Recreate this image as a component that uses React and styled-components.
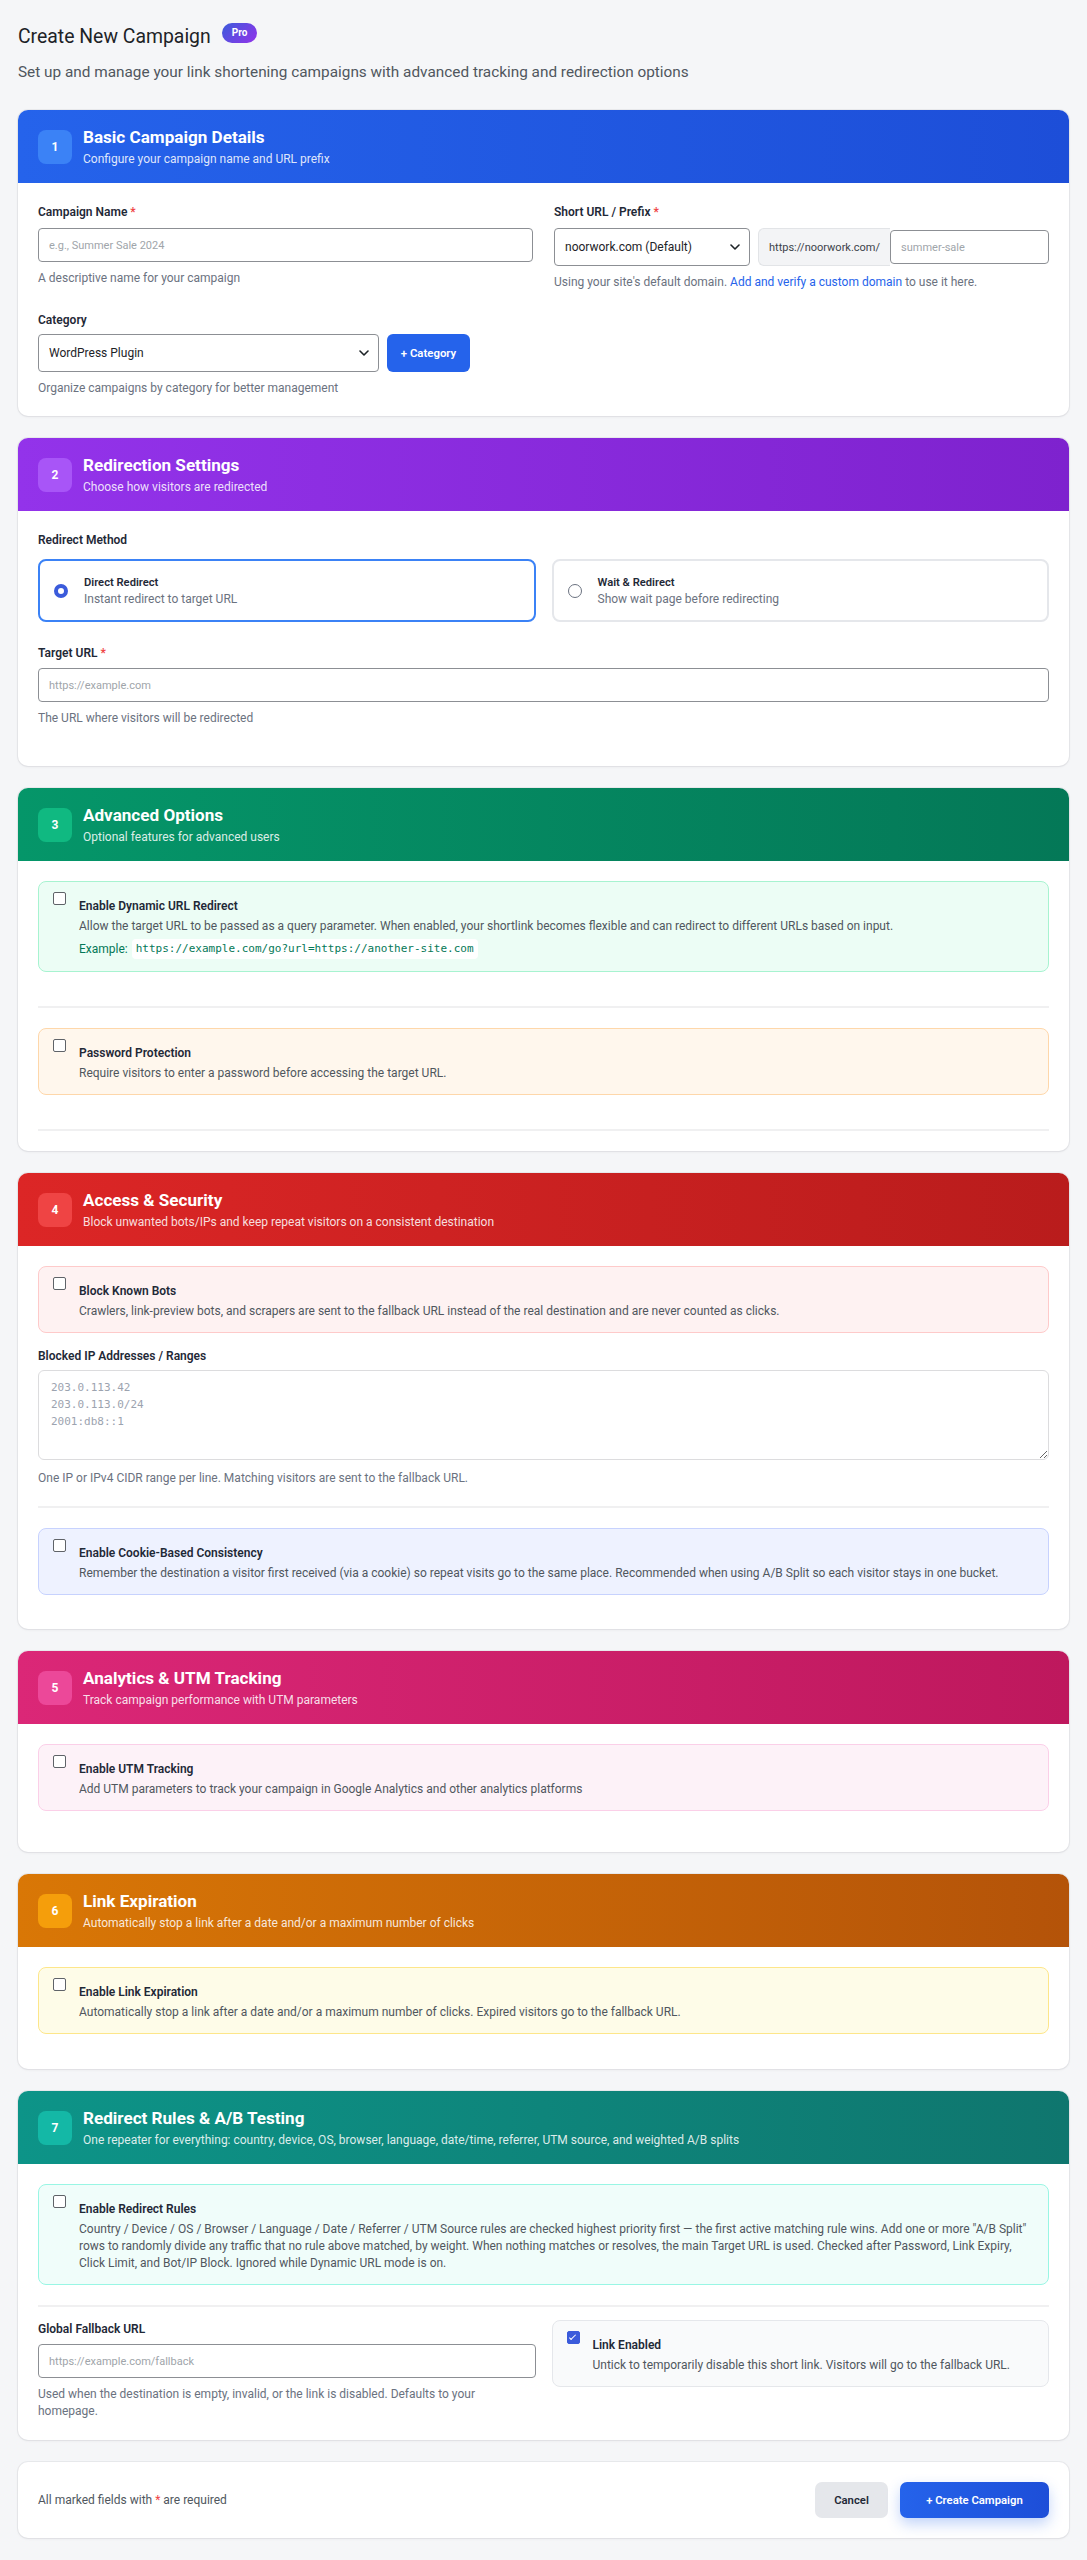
import React from 'react';
import styled, { createGlobalStyle, css } from 'styled-components';

const GlobalStyle = createGlobalStyle`
  html, body { margin: 0; padding: 0; }
  body {
    background: #f5f6f8;
    font-family: Roboto, "Noto Sans", "Liberation Sans", Arial, sans-serif;
    color: #1f2937;
    -webkit-font-smoothing: antialiased;
  }
  *, *::before, *::after { box-sizing: border-box; }
`;

const Page = styled.div`
  padding: 23px 18px 24px;
`;

const TitleRow = styled.div`
  display: flex;
  align-items: flex-start;
  gap: 11px;
`;

const Title = styled.h1`
  margin: 0;
  font-size: 19.4px;
  line-height: 28px;
  font-weight: 400;
  color: #1d2327;
`;

const ProBadge = styled.span`
  display: inline-block;
  height: 20px;
  line-height: 20px;
  padding: 0 10px;
  border-radius: 10px;
  font-size: 10px;
  font-weight: 700;
  color: #fff;
  background: linear-gradient(135deg, #3b5bdb 0%, #9333ea 100%);
`;

const Subtitle = styled.p`
  margin: 10px 0 27px;
  font-size: 15.35px;
  line-height: 22px;
  color: #50575e;
`;

const Stack = styled.div`
  display: flex;
  flex-direction: column;
  gap: 22px;
`;

const Card = styled.section`
  background: #fff;
  border-radius: 10px;
  overflow: hidden;
  box-shadow: 0 0 0 1px rgba(15, 23, 42, 0.05), 0 1px 3px rgba(15, 23, 42, 0.06);
`;

const CardHeader = styled.header`
  display: flex;
  align-items: center;
  gap: 11px;
  min-height: 73px;
  padding: 0 20px;
  background: linear-gradient(90deg, ${p => p.$from} 0%, ${p => p.$to} 100%);
  color: #fff;
`;

const StepBadge = styled.span`
  flex: none;
  width: 34px;
  height: 34px;
  border-radius: 8px;
  display: flex;
  align-items: center;
  justify-content: center;
  font-size: 12px;
  font-weight: 700;
  color: #fff;
  background: ${p => p.$bg};
`;

const HeaderText = styled.div`
  display: flex;
  flex-direction: column;
`;

const HeaderTitle = styled.h2`
  margin: 0;
  font-size: 17.1px;
  line-height: 22px;
  font-weight: 700;
`;

const HeaderSub = styled.p`
  margin: 3px 0 0;
  font-size: 12px;
  line-height: 16px;
  color: rgba(255, 255, 255, 0.86);
`;

const CardBody = styled.div`
  padding: 20px 20px ${p => p.$pb ?? 20}px;
`;

const Grid2 = styled.div`
  display: grid;
  grid-template-columns: minmax(0, 1fr) minmax(0, 1fr);
  column-gap: ${p => p.$gap ?? 21}px;
  row-gap: ${p => p.$rowGap ?? 21}px;
  align-items: start;
`;

const Field = styled.div`
  display: flex;
  flex-direction: column;
  margin-top: ${p => p.$mt ?? 0}px;
`;

const Label = styled.label`
  font-size: 12px;
  line-height: 18px;
  font-weight: 600;
  color: #1f2937;
  margin-bottom: ${p => p.$mb ?? 6}px;
`;

const Req = styled.span`
  color: #ef4444;
  margin-left: ${p => (p.$tight ? 0 : 3)}px;
`;

const inputBase = css`
  font-family: inherit;
  font-size: 11px;
  color: #1f2937;
  background: #fff;
  border: 1px solid #8c8f94;
  border-radius: 4px;
  outline: none;
  &::placeholder { color: #a0a5aa; }
`;

const TextInput = styled.input`
  ${inputBase};
  height: 34px;
  padding: 0 10px;
  width: ${p => (p.$flex ? 'auto' : '100%')};
  flex: ${p => (p.$flex ? '1 1 0' : 'none')};
  min-width: 0;
`;

const SelectWrap = styled.div`
  position: relative;
  width: ${p => p.$w}px;
  flex: none;
`;

const Select = styled.select`
  ${inputBase};
  appearance: none;
  -webkit-appearance: none;
  width: 100%;
  height: 38px;
  padding: 0 28px 0 10px;
  font-size: 12px;
  color: #1d2327;
`;

const Chevron = styled.svg`
  position: absolute;
  right: 10px;
  top: 50%;
  transform: translateY(-50%);
  pointer-events: none;
`;

const Helper = styled.p`
  margin: ${p => p.$mt ?? 8}px 0 0;
  font-size: 12px;
  line-height: ${p => p.$lh ?? 16}px;
  color: #6b7280;
`;

const InlineLink = styled.a`
  color: #2563eb;
  text-decoration: none;
`;

const Row = styled.div`
  display: flex;
  align-items: center;
  gap: ${p => p.$gap ?? 8}px;
`;

const BlueButton = styled.button`
  flex: none;
  height: 38px;
  width: 83px;
  padding: 0;
  border: none;
  border-radius: 6px;
  background: #2563eb;
  color: #fff;
  font-family: inherit;
  font-size: 11.4px;
  font-weight: 600;
`;

const PrefixAddon = styled.span`
  flex: none;
  height: 38px;
  display: flex;
  align-items: center;
  padding: 0 10px;
  background: #f3f4f6;
  border: 1px solid #e2e4e7;
  border-right: none;
  border-radius: 6px 0 0 6px;
  font-size: 11px;
  color: #3c434a;
  white-space: nowrap;
`;

const PrefixGroup = styled.div`
  display: flex;
  align-items: center;
  flex: 1 1 0;
  min-width: 0;
`;

const RadioCard = styled.label`
  display: flex;
  align-items: center;
  gap: 16px;
  height: 63px;
  padding: 0 14px;
  border: 2px solid ${p => (p.$active ? '#3b82f6' : '#e5e7eb')};
  border-radius: 8px;
  background: #fff;
`;

const Radio = styled.input.attrs({ type: 'radio' })`
  appearance: none;
  -webkit-appearance: none;
  flex: none;
  margin: 0;
  width: 14px;
  height: 14px;
  border-radius: 50%;
  border: 1px solid #6b7280;
  background: #fff;
  &:checked {
    border: 4px solid #3b5bdb;
  }
`;

const RadioText = styled.div`
  display: flex;
  flex-direction: column;
`;

const RadioTitle = styled.span`
  font-size: 11.2px;
  line-height: 17px;
  font-weight: 600;
  color: #1f2937;
`;

const RadioDesc = styled.span`
  font-size: 12px;
  line-height: 17px;
  color: #6b7280;
`;

const Section = styled.div`
  ${p =>
    p.$divided &&
    css`
      padding-bottom: ${p.$pb ?? 20}px;
      margin-bottom: ${p.$mb ?? 20}px;
      border-bottom: 2px solid #f0f0f1;
    `}
`;

const OptionBox = styled.div`
  display: flex;
  align-items: flex-start;
  gap: 13px;
  padding: 10px 15px 12px 14px;
  border: 1px solid ${p => p.$border};
  background: ${p => p.$bg};
  border-radius: 8px;
  margin-bottom: ${p => p.$mb ?? 14}px;
`;

const Checkbox = styled.input.attrs({ type: 'checkbox' })`
  appearance: none;
  -webkit-appearance: none;
  position: relative;
  flex: none;
  margin: 0;
  width: 13px;
  height: 13px;
  border: 1px solid #5f6368;
  border-radius: 2px;
  background: #fff;
  &:checked {
    background: #3b5bdb;
    border-color: #3b5bdb;
  }
  &:checked::after {
    content: '';
    position: absolute;
    left: 3.5px;
    top: 0.5px;
    width: 3px;
    height: 7px;
    border: solid #fff;
    border-width: 0 1.6px 1.6px 0;
    transform: rotate(45deg);
  }
`;

const OptionContent = styled.div`
  margin-top: 5px;
  display: flex;
  flex-direction: column;
  min-width: 0;
`;

const OptionTitle = styled.span`
  font-size: 12px;
  line-height: 18px;
  font-weight: 600;
  color: #1f2937;
`;

const OptionDesc = styled.p`
  margin: 3px 0 0;
  font-size: 12px;
  line-height: 17px;
  color: #50575e;
`;

const ExampleRow = styled.div`
  margin-top: 4px;
  display: flex;
  align-items: center;
  gap: 4px;
  font-size: 12px;
  color: #047857;
`;

const Code = styled.code`
  font-family: "DejaVu Sans Mono", "Liberation Mono", monospace;
  font-size: 11px;
  line-height: 20px;
  padding: 0 4px;
  border-radius: 4px;
  background: #fff;
  color: #047857;
`;

const TextArea = styled.textarea`
  font-family: "DejaVu Sans Mono", "Liberation Mono", monospace;
  font-size: 11px;
  line-height: 17px;
  height: 90px;
  width: 100%;
  padding: 8px 12px;
  border: 1px solid #dcdcde;
  border-radius: 6px;
  resize: vertical;
  color: #1f2937;
  &::placeholder { color: #9ca3af; }
`;

const FooterBar = styled.div`
  display: flex;
  align-items: center;
  justify-content: space-between;
  padding: 20px;
`;

const FooterNote = styled.span`
  font-size: 12px;
  color: #50575e;
`;

const Buttons = styled.div`
  display: flex;
  gap: 12px;
`;

const CancelButton = styled.button`
  height: 36px;
  width: 73px;
  border: none;
  border-radius: 7px;
  background: #e5e7eb;
  color: #1f2937;
  font-family: inherit;
  font-size: 11.3px;
  font-weight: 600;
`;

const PrimaryButton = styled.button`
  height: 36px;
  width: 149px;
  border: none;
  border-radius: 7px;
  background: linear-gradient(90deg, #2563eb 0%, #1d4ed8 100%);
  color: #fff;
  font-family: inherit;
  font-size: 11.3px;
  font-weight: 600;
  box-shadow: 0 6px 14px rgba(37, 99, 235, 0.28);
`;

const ChevronIcon = () => (
  <Chevron width="10" height="6" viewBox="0 0 10 6" fill="none">
    <path d="M1 1l4 4 4-4" stroke="#1d2327" strokeWidth="1.6" strokeLinecap="round" strokeLinejoin="round" />
  </Chevron>
);

const Header = ({ n, title, sub, from, to, badge }) => (
  <CardHeader $from={from} $to={to}>
    <StepBadge $bg={badge}>{n}</StepBadge>
    <HeaderText>
      <HeaderTitle>{title}</HeaderTitle>
      <HeaderSub>{sub}</HeaderSub>
    </HeaderText>
  </CardHeader>
);

const Option = ({ title, children, bg, border, checked, mb }) => (
  <OptionBox $bg={bg} $border={border} $mb={mb}>
    <Checkbox defaultChecked={checked} />
    <OptionContent>
      <OptionTitle>{title}</OptionTitle>
      {children}
    </OptionContent>
  </OptionBox>
);

export default function App() {
  return (
    <>
      <GlobalStyle />
      <Page>
        <TitleRow>
          <Title>Create New Campaign</Title>
          <ProBadge>Pro</ProBadge>
        </TitleRow>
        <Subtitle>
          Set up and manage your link shortening campaigns with advanced tracking and redirection options
        </Subtitle>

        <Stack>
          <Card>
            <Header n="1" title="Basic Campaign Details" sub="Configure your campaign name and URL prefix" from="#2563eb" to="#1d4ed8" badge="#3b82f6" />
            <CardBody>
              <Grid2>
                <Field>
                  <Label $mb={7}>Campaign Name<Req>*</Req></Label>
                  <TextInput placeholder="e.g., Summer Sale 2024" />
                  <Helper>A descriptive name for your campaign</Helper>
                </Field>
                <Field>
                  <Label $mb={7}>Short URL / Prefix<Req>*</Req></Label>
                  <Row>
                    <SelectWrap $w={196}>
                      <Select defaultValue="d">
                        <option value="d">noorwork.com (Default)</option>
                      </Select>
                      <ChevronIcon />
                    </SelectWrap>
                    <PrefixGroup>
                      <PrefixAddon>https://noorwork.com/</PrefixAddon>
                      <TextInput $flex placeholder="summer-sale" />
                    </PrefixGroup>
                  </Row>
                  <Helper>
                    Using your site's default domain. <InlineLink href="#">Add and verify a custom domain</InlineLink> to use it here.
                  </Helper>
                </Field>
                <Field>
                  <Label $mb={5}>Category</Label>
                  <Row>
                    <SelectWrap $w={341}>
                      <Select defaultValue="wp">
                        <option value="wp">WordPress Plugin</option>
                      </Select>
                      <ChevronIcon />
                    </SelectWrap>
                    <BlueButton>+ Category</BlueButton>
                  </Row>
                  <Helper>Organize campaigns by category for better management</Helper>
                </Field>
              </Grid2>
            </CardBody>
          </Card>

          <Card>
            <Header n="2" title="Redirection Settings" sub="Choose how visitors are redirected" from="#9333ea" to="#7e22ce" badge="#a855f7" />
            <CardBody $pb={40}>
              <Field>
                <Label $mb={10}>Redirect Method</Label>
                <Grid2 $gap={16}>
                  <RadioCard $active>
                    <Radio name="method" defaultChecked />
                    <RadioText>
                      <RadioTitle>Direct Redirect</RadioTitle>
                      <RadioDesc>Instant redirect to target URL</RadioDesc>
                    </RadioText>
                  </RadioCard>
                  <RadioCard>
                    <Radio name="method" />
                    <RadioText>
                      <RadioTitle>Wait &amp; Redirect</RadioTitle>
                      <RadioDesc>Show wait page before redirecting</RadioDesc>
                    </RadioText>
                  </RadioCard>
                </Grid2>
              </Field>
              <Field $mt={22}>
                <Label>Target URL<Req>*</Req></Label>
                <TextInput placeholder="https://example.com" />
                <Helper>The URL where visitors will be redirected</Helper>
              </Field>
            </CardBody>
          </Card>

          <Card>
            <Header n="3" title="Advanced Options" sub="Optional features for advanced users" from="#059669" to="#047857" badge="#10b981" />
            <CardBody>
              <Section $divided>
                <Option title="Enable Dynamic URL Redirect" bg="#ecfdf5" border="#a7f3d0">
                  <OptionDesc>
                    Allow the target URL to be passed as a query parameter. When enabled, your shortlink becomes flexible and can redirect to different URLs based on input.
                  </OptionDesc>
                  <ExampleRow>
                    Example: <Code>https://example.com/go?url=https://another-site.com</Code>
                  </ExampleRow>
                </Option>
              </Section>
              <Section $divided $mb={0}>
                <Option title="Password Protection" bg="#fff7ed" border="#fed7aa">
                  <OptionDesc>Require visitors to enter a password before accessing the target URL.</OptionDesc>
                </Option>
              </Section>
            </CardBody>
          </Card>

          <Card>
            <Header n="4" title="Access &amp; Security" sub="Block unwanted bots/IPs and keep repeat visitors on a consistent destination" from="#dc2626" to="#b91c1c" badge="#ef4444" />
            <CardBody>
              <Section $divided>
                <Option title="Block Known Bots" bg="#fef2f2" border="#fecaca">
                  <OptionDesc>
                    Crawlers, link-preview bots, and scrapers are sent to the fallback URL instead of the real destination and are never counted as clicks.
                  </OptionDesc>
                </Option>
                <Field>
                  <Label $mb={5}>Blocked IP Addresses / Ranges</Label>
                  <TextArea placeholder={'203.0.113.42\n203.0.113.0/24\n2001:db8::1'} />
                  <Helper $mt={10}>One IP or IPv4 CIDR range per line. Matching visitors are sent to the fallback URL.</Helper>
                </Field>
              </Section>
              <Option title="Enable Cookie-Based Consistency" bg="#eef2ff" border="#c7d2fe">
                <OptionDesc>
                  Remember the destination a visitor first received (via a cookie) so repeat visits go to the same place. Recommended when using A/B Split so each visitor stays in one bucket.
                </OptionDesc>
              </Option>
            </CardBody>
          </Card>

          <Card>
            <Header n="5" title="Analytics &amp; UTM Tracking" sub="Track campaign performance with UTM parameters" from="#db2777" to="#be185d" badge="#ec4899" />
            <CardBody $pb={27}>
              <Option title="Enable UTM Tracking" bg="#fdf2f8" border="#fbcfe8">
                <OptionDesc>Add UTM parameters to track your campaign in Google Analytics and other analytics platforms</OptionDesc>
              </Option>
            </CardBody>
          </Card>

          <Card>
            <Header n="6" title="Link Expiration" sub="Automatically stop a link after a date and/or a maximum number of clicks" from="#d97706" to="#b45309" badge="#f59e0b" />
            <CardBody $pb={21}>
              <Option title="Enable Link Expiration" bg="#fefce8" border="#fde68a">
                <OptionDesc>Automatically stop a link after a date and/or a maximum number of clicks. Expired visitors go to the fallback URL.</OptionDesc>
              </Option>
            </CardBody>
          </Card>

          <Card>
            <Header n="7" title="Redirect Rules &amp; A/B Testing" sub="One repeater for everything: country, device, OS, browser, language, date/time, referrer, UTM source, and weighted A/B splits" from="#0d9488" to="#0f766e" badge="#14b8a6" />
            <CardBody>
              <Section $divided $pb={6} $mb={13}>
                <Option title="Enable Redirect Rules" bg="#f0fdfa" border="#99f6e4">
                  <OptionDesc>
                    Country / Device / OS / Browser / Language / Date / Referrer / UTM Source rules are checked highest priority first — the first active matching rule wins. Add one or more "A/B Split" rows to randomly divide any traffic that no rule above matched, by weight. When nothing matches or resolves, the main Target URL is used. Checked after Password, Link Expiry, Click Limit, and Bot/IP Block. Ignored while Dynamic URL mode is on.
                  </OptionDesc>
                </Option>
              </Section>
              <Grid2 $gap={16}>
                <Field>
                  <Label>Global Fallback URL</Label>
                  <TextInput placeholder="https://example.com/fallback" />
                  <Helper $lh={17}>Used when the destination is empty, invalid, or the link is disabled. Defaults to your homepage.</Helper>
                </Field>
                <Option title="Link Enabled" bg="#f9fafb" border="#e5e7eb" checked mb={0}>
                  <OptionDesc>Untick to temporarily disable this short link. Visitors will go to the fallback URL.</OptionDesc>
                </Option>
              </Grid2>
            </CardBody>
          </Card>

          <Card>
            <FooterBar>
              <FooterNote>All marked fields with <Req $tight>*</Req> are required</FooterNote>
              <Buttons>
                <CancelButton>Cancel</CancelButton>
                <PrimaryButton>+ Create Campaign</PrimaryButton>
              </Buttons>
            </FooterBar>
          </Card>
        </Stack>
      </Page>
    </>
  );
}
